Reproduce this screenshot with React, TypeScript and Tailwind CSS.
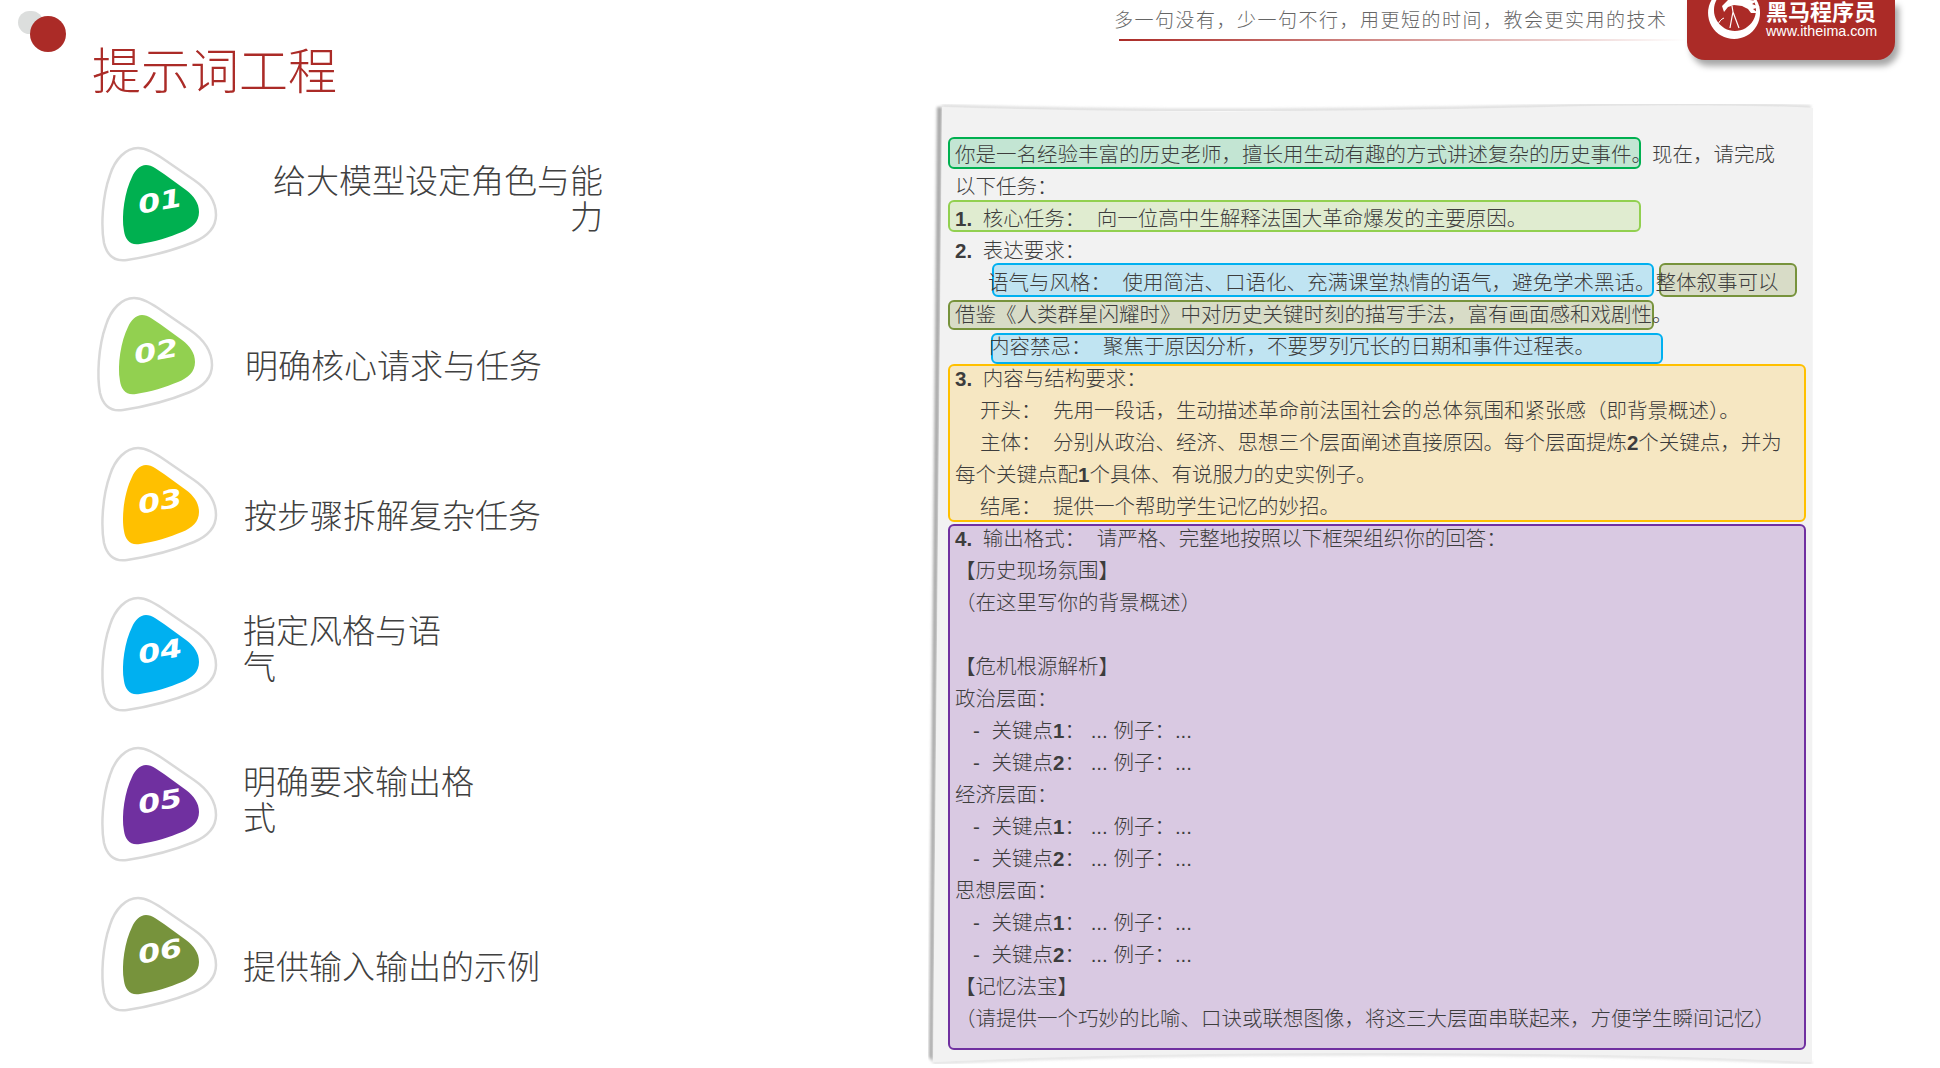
import React from "react";

const CJK = "font-['Liberation_Sans','Noto_Sans_CJK_SC',sans-serif]";

const OUTER =
  "M36 1C44 1 52 6 60 11L92 33C105 42 114 54 114 68C114 80 106 89 92 95C70 104 45 110 25 113C12 115 5 108 2 96C-1 80 0 50 8 28C13 12 24 1 36 1Z";
const INNER =
  "M44 18C50 18 56 23 62 27L84 43C92 49 97 56 97 65C97 75 90 81 80 85C68 90 52 95 38 97C28 99 23 92 22 84C19 68 23 44 30 30C33 23 38 18 44 18Z";

const rows = [
  { n: "01", color: "#00b050", rowClass: "", textClass: "ml-[56px] mt-[17px] w-[330px] text-right", label: "给大模型设定角色与能力" },
  { n: "02", color: "#92d050", rowClass: "-ml-[4px]", textClass: "ml-[32px] mt-[52px] w-[320px]", label: "明确核心请求与任务" },
  { n: "03", color: "#ffc000", rowClass: "", textClass: "ml-[27px] mt-[52px] w-[320px]", label: "按步骤拆解复杂任务" },
  { n: "04", color: "#00b0f0", rowClass: "", textClass: "ml-[26px] mt-[17px] w-[200px]", label: "指定风格与语气" },
  { n: "05", color: "#7030a0", rowClass: "", textClass: "ml-[26px] mt-[18px] w-[235px]", label: "明确要求输出格式" },
  { n: "06", color: "#77933c", rowClass: "", textClass: "ml-[26px] mt-[53px] w-[320px]", label: "提供输入输出的示例" },
];

const boxes = [
  "left-[14px] top-[31px] w-[693px] h-[32px] border-[#00b050] bg-[#c3e5d3]",
  "left-[14px] top-[94px] w-[693px] h-[32px] border-[#92d050] bg-[#e0ecd0]",
  "left-[58px] top-[157px] w-[662px] h-[34px] border-[#00b0f0] bg-[#c0e4f2]",
  "left-[725px] top-[157px] w-[138px] h-[34px] border-[#77933c] bg-[#d8dcc7]",
  "left-[14px] top-[194px] w-[706px] h-[30px] border-[#77933c] bg-[#d8dcc7]",
  "left-[57px] top-[227px] w-[672px] h-[31px] border-[#00b0f0] bg-[#c0e4f2]",
  "left-[14px] top-[258px] w-[858px] h-[158px] border-[#ffc000] bg-[#f6e7c2]",
  "left-[14px] top-[418px] w-[858px] h-[526px] border-[#7030a0] bg-[#d9c9e2]",
];

const D = ({ children }: { children: React.ReactNode }) => <span className="font-bold">{children}</span>;
const N = ({ children }: { children: React.ReactNode }) => <span className="mr-[5px] font-bold">{children}</span>;

const Keypoints = () => (
  <>
    <div className="h-[32px] pl-[18px]">
      <span className="mr-[6px]">-</span> 关键点<D>1</D>： ... 例子：...
    </div>
    <div className="h-[32px] pl-[18px]">
      <span className="mr-[6px]">-</span> 关键点<D>2</D>： ... 例子：...
    </div>
  </>
);

export default function App() {
  return (
    <div className={`relative flex h-[1068px] w-full overflow-hidden bg-white ${CJK}`}>
      {/* left column */}
      <div className="relative w-[925px] shrink-0">
        <div className="absolute left-[18px] top-[11px] h-[23px] w-[25px] rounded-full bg-[#dcdedd]" />
        <div className="absolute left-[30px] top-[16px] h-[36px] w-[36px] rounded-full bg-[#ab2b27]" />
        <h1 className="pl-[92px] pt-[42px] text-[49px] leading-[60px] font-light text-[#ab2b27]">提示词工程</h1>
        <div className="mt-[45px] flex flex-col pl-[102px]">
          {rows.map((r) => (
            <div key={r.n} className={`flex h-[150px] items-start ${r.rowClass}`}>
              <svg width="115" height="116" viewBox="0 0 115 116" className="shrink-0 overflow-visible">
                <path d={OUTER} fill="#fff" stroke="#d9d9d9" strokeWidth="2.5" />
                <path d={INNER} fill={r.color} />
                <text
                  x="0"
                  y="9"
                  textAnchor="middle"
                  fill="#fff"
                  fontSize="25"
                  fontWeight="700"
                  fontStyle="italic"
                  fontFamily="'DejaVu Sans',sans-serif"
                  transform="translate(58 54) rotate(-10) scale(1.28 1)"
                >
                  {r.n}
                </text>
              </svg>
              <div className={`text-[33px] leading-[36px] font-light text-[#404040] ${r.textClass}`}>{r.label}</div>
            </div>
          ))}
        </div>
      </div>

      {/* right column */}
      <div className="flex min-w-0 flex-1 flex-col">
        <div className="flex h-[106px] shrink-0 items-start">
          <div className="ml-[189px] mt-[5px] w-[573px] shrink-0">
            <div className="h-[34px] text-[19px] leading-[32px] font-light tracking-[1.5px] whitespace-nowrap text-[#666]">
              多一句没有，少一句不行，用更短的时间，教会更实用的技术
            </div>
            <div className="ml-[5px] h-[2px] w-[568px] bg-gradient-to-r from-[#ab2b27] to-transparent" />
          </div>
          <div className="relative z-10 flex h-[60px] w-[208px] shrink-0 items-start rounded-b-[18px] bg-[#ab2b27] pl-[17px] shadow-[4px_6px_6px_rgba(0,0,0,0.35)]">
            <svg width="60" height="42" viewBox="0 0 60 42" className="shrink-0">
              <path fillRule="evenodd" fill="#fff" d="M30 -13a26 26 0 1 0 0.1 0ZM31 -11a21 21 0 1 1 -0.1 0Z" />
              <path
                fill="#fff"
                d="M18 6L24 0L46 0L53 1L48 4L56 7L49 9L54 13L47 13L44 9L38 6L30 5L24 7L20 12Z"
              />
              <path d="M26 28C27 22 28 17 29 12C31 17 33 23 35 28M29 12L28 6" fill="none" stroke="#fff" strokeWidth="1.2" />
              <path d="M13 26C15 22 17 19 20 18" fill="none" stroke="#fff" strokeWidth="1" />
            </svg>
            <div className="ml-[2px] flex flex-col">
              <div className="mt-[2px] text-[22px] leading-[22px] font-bold whitespace-nowrap text-white">黑马程序员</div>
              <div className="font-['Liberation_Sans',sans-serif] text-[14.3px] leading-[14px] whitespace-nowrap text-white">www.itheima.com</div>
            </div>
          </div>
        </div>

        <div className="relative ml-[9px] h-[956px] w-[879px] shrink-0 pl-[21px] pt-[33px]">
          <svg
            width="900"
            height="980"
            viewBox="0 0 900 980"
            className="pointer-events-none absolute -left-[9px] -top-[11px]"
          >
            <defs>
              <filter id="b" x="-5%" y="-5%" width="110%" height="110%">
                <feGaussianBlur stdDeviation="1.5" />
              </filter>
            </defs>
            <path d="M12 12L17 12L8 967L4 962Z" fill="#a6a6a6" filter="url(#b)" />
            <path d="M17 11C200 17 400 17 667 10C750 9 830 9 886 12" fill="none" stroke="#d0d0d0" strokeWidth="2.5" filter="url(#b)" />
            <path d="M8 968C150 961 300 959 450 959C600 959 750 961 887 968" fill="none" stroke="#d0d0d0" strokeWidth="2" filter="url(#b)" />
            <path
              d="M17 12C200 18 400 18 667 11C750 10 830 10 888 13L887 967C750 960 600 958 450 958C300 958 150 960 8 967Z"
              fill="#f2f2f2"
            />
          </svg>

          {boxes.map((b) => (
            <div key={b} className={`absolute rounded-[6px] border-2 ${b}`} />
          ))}

          <div className="relative w-[850px] text-[20.5px] leading-[32px] font-light whitespace-pre text-[#3d3d3d]">
            <div className="h-[32px]">你是一名经验丰富的历史老师，擅长用生动有趣的方式讲述复杂的历史事件。现在，请完成</div>
            <div className="h-[32px]">以下任务：</div>
            <div className="h-[32px]"><N>1.</N> 核心任务：  向一位高中生解释法国大革命爆发的主要原因。</div>
            <div className="h-[32px]"><N>2.</N> 表达要求：</div>
            <div className="h-[32px] pl-[33px]">语气与风格：  使用简洁、口语化、充满课堂热情的语气，避免学术黑话。整体叙事可以</div>
            <div className="h-[32px]">借鉴《人类群星闪耀时》中对历史关键时刻的描写手法，富有画面感和戏剧性。</div>
            <div className="h-[32px] pl-[34px]">内容禁忌：  聚焦于原因分析，不要罗列冗长的日期和事件过程表。</div>
            <div className="h-[32px]"><N>3.</N> 内容与结构要求：</div>
            <div className="h-[32px] pl-[25px]">开头：  先用一段话，生动描述革命前法国社会的总体氛围和紧张感（即背景概述）。</div>
            <div className="h-[32px] pl-[25px]">主体：  分别从政治、经济、思想三个层面阐述直接原因。每个层面提炼<D>2</D>个关键点，并为</div>
            <div className="h-[32px]">每个关键点配<D>1</D>个具体、有说服力的史实例子。</div>
            <div className="h-[32px] pl-[25px]">结尾：  提供一个帮助学生记忆的妙招。</div>
            <div className="h-[32px]"><N>4.</N> 输出格式：  请严格、完整地按照以下框架组织你的回答：</div>
            <div className="h-[32px]">【历史现场氛围】</div>
            <div className="h-[32px]">（在这里写你的背景概述）</div>
            <div className="h-[32px]" />
            <div className="h-[32px]">【危机根源解析】</div>
            <div className="h-[32px]">政治层面：</div>
            <Keypoints />
            <div className="h-[32px]">经济层面：</div>
            <Keypoints />
            <div className="h-[32px]">思想层面：</div>
            <Keypoints />
            <div className="h-[32px]">【记忆法宝】</div>
            <div className="h-[32px]">（请提供一个巧妙的比喻、口诀或联想图像，将这三大层面串联起来，方便学生瞬间记忆）</div>
          </div>
        </div>
      </div>
    </div>
  );
}
